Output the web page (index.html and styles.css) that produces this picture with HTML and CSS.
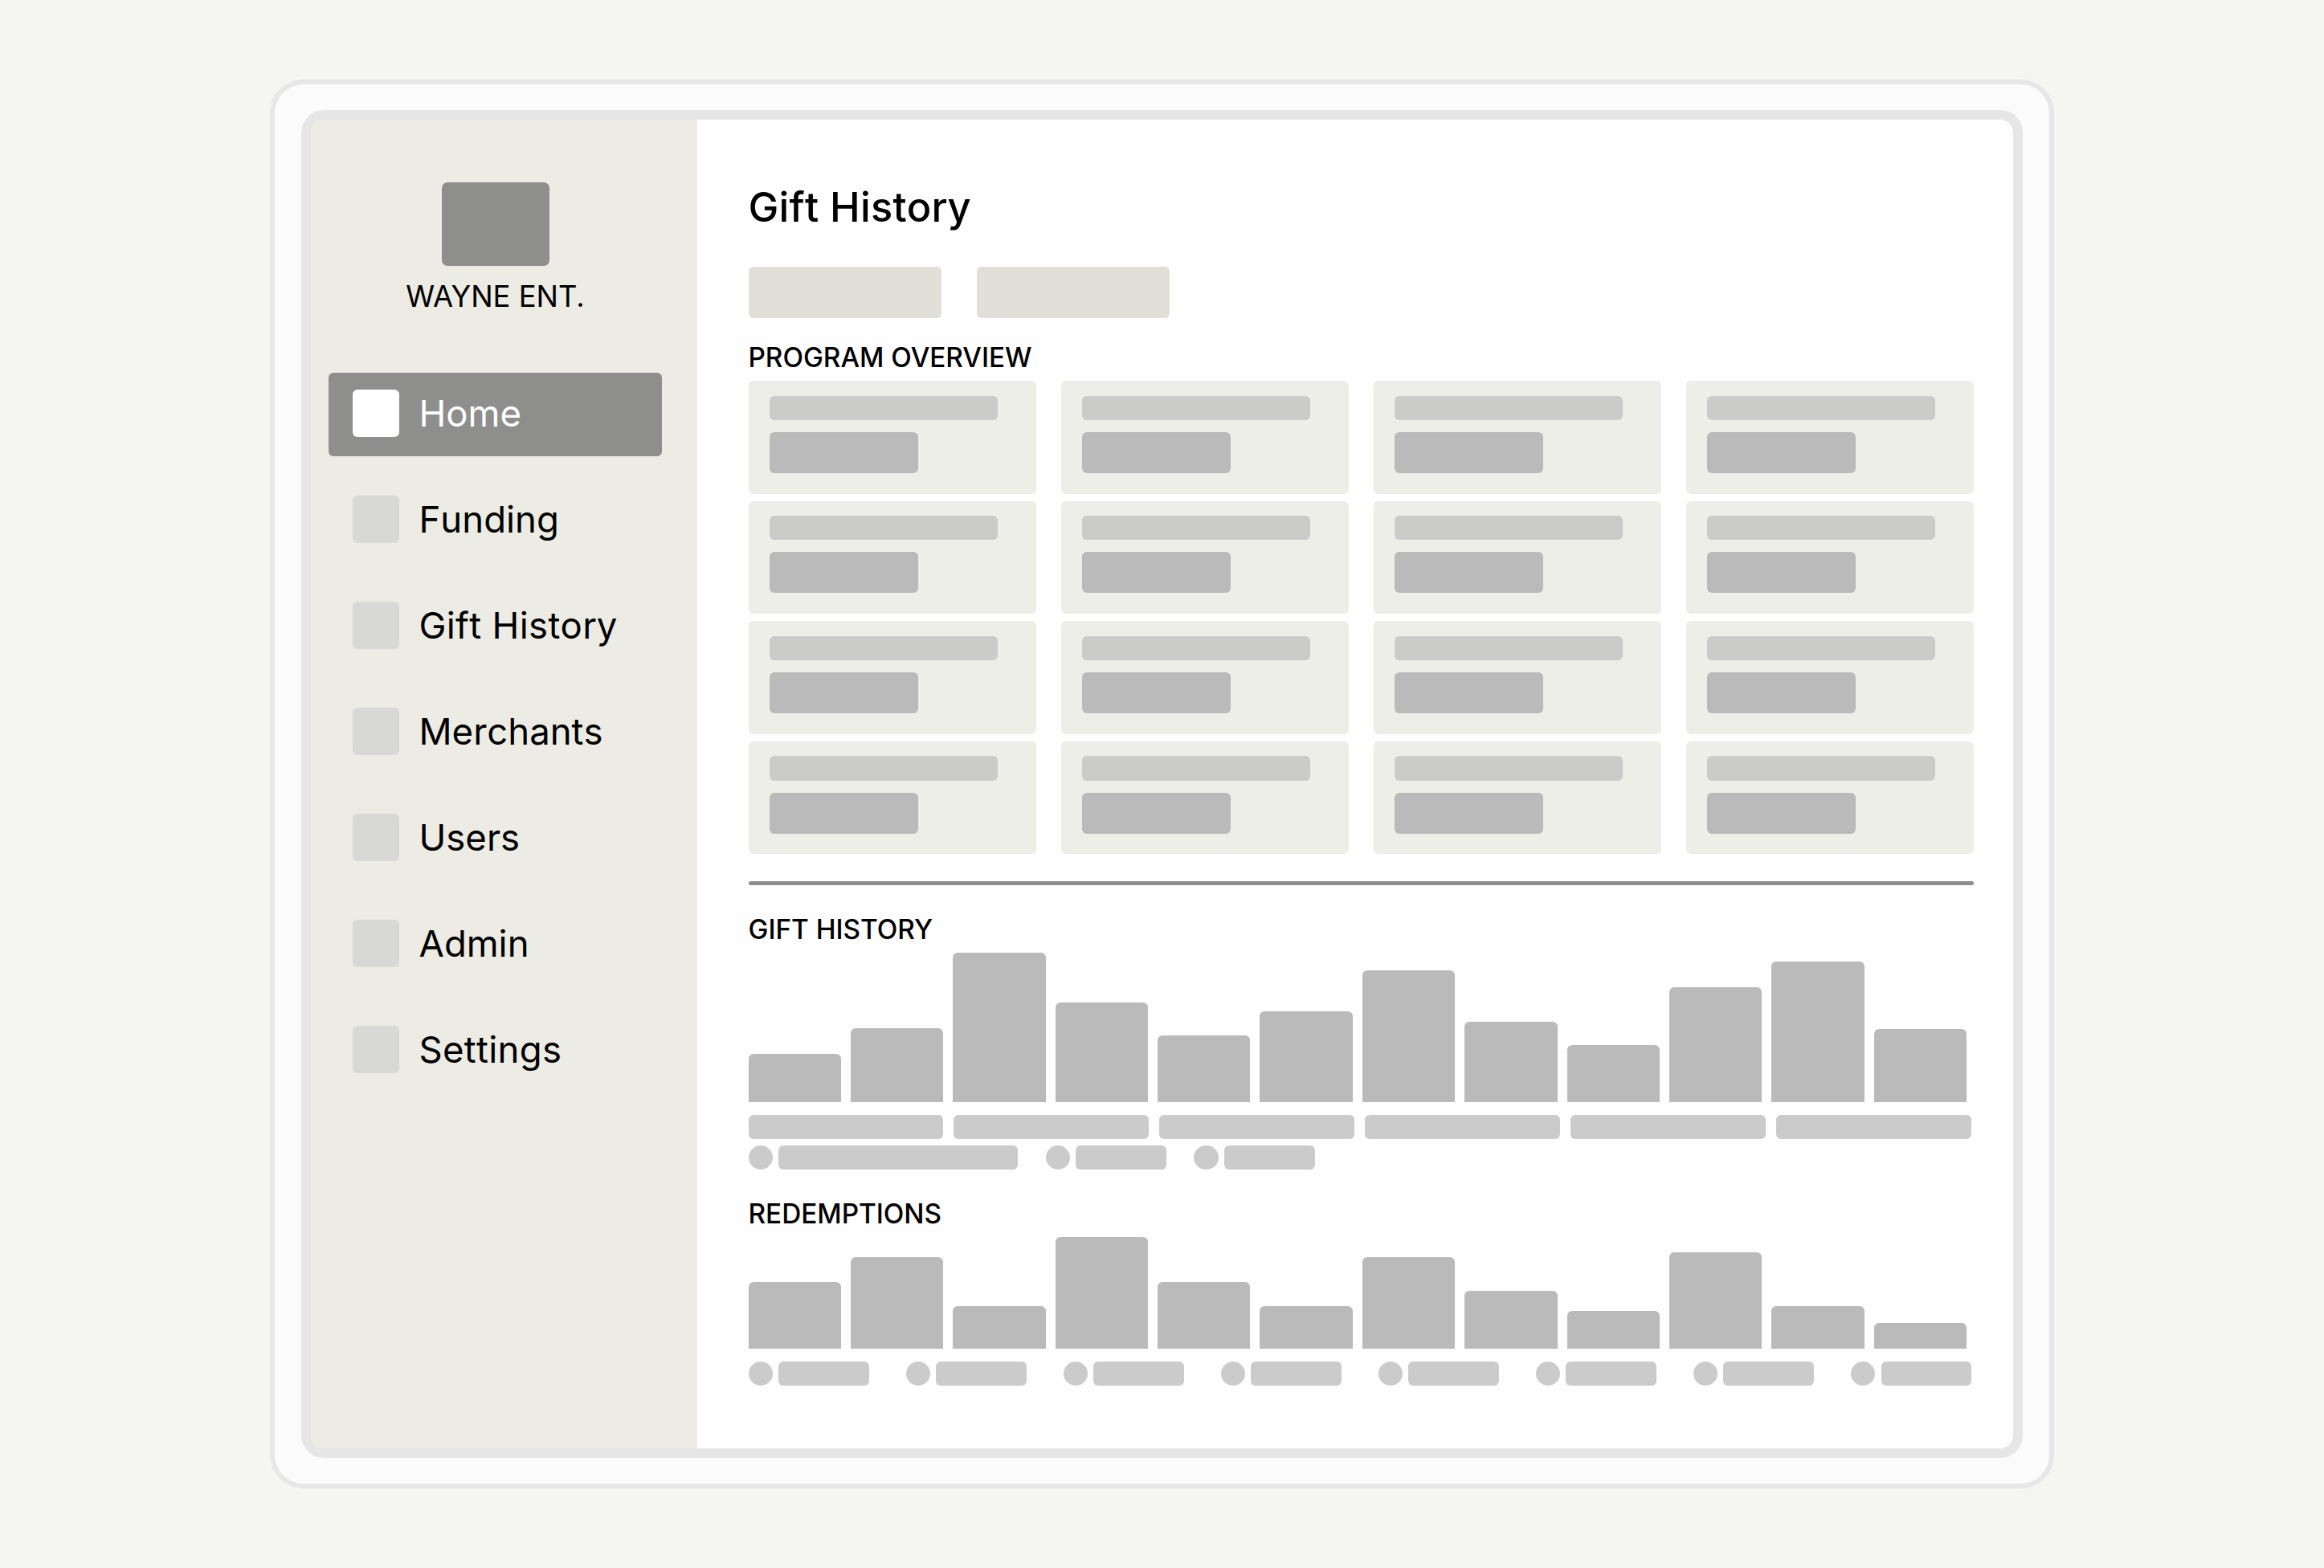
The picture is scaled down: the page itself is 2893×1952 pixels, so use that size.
FILE: index.html
```html
<!DOCTYPE html>
<html lang="en">
<head>
<meta charset="utf-8">
<title>Gift History</title>
<link rel="stylesheet" href="styles.css">
</head>
<body>
<div class="device">
  <div class="screen">
    <aside class="sidebar">
      <div class="logo"></div>
      <div class="company">WAYNE ENT.</div>
      <nav class="nav">
        <a class="nav-item active"><span class="nav-icon"></span><span>Home</span></a>
        <a class="nav-item"><span class="nav-icon"></span><span>Funding</span></a>
        <a class="nav-item spaced"><span class="nav-icon"></span><span>Gift History</span></a>
        <a class="nav-item"><span class="nav-icon"></span><span>Merchants</span></a>
        <a class="nav-item"><span class="nav-icon"></span><span>Users</span></a>
        <a class="nav-item"><span class="nav-icon"></span><span>Admin</span></a>
        <a class="nav-item spaced"><span class="nav-icon"></span><span>Settings</span></a>
      </nav>
    </aside>
    <main class="main">
      <h1 class="title">Gift History</h1>
      <div class="filters"><div class="filter"></div><div class="filter"></div></div>

      <h2 class="heading heading-overview"><span>PROGRAM OVERVIEW</span></h2>
      <div class="cards">
        <div class="card"><div class="label"></div><div class="value"></div></div>
        <div class="card"><div class="label"></div><div class="value"></div></div>
        <div class="card"><div class="label"></div><div class="value"></div></div>
        <div class="card"><div class="label"></div><div class="value"></div></div>
        <div class="card"><div class="label"></div><div class="value"></div></div>
        <div class="card"><div class="label"></div><div class="value"></div></div>
        <div class="card"><div class="label"></div><div class="value"></div></div>
        <div class="card"><div class="label"></div><div class="value"></div></div>
        <div class="card"><div class="label"></div><div class="value"></div></div>
        <div class="card"><div class="label"></div><div class="value"></div></div>
        <div class="card"><div class="label"></div><div class="value"></div></div>
        <div class="card"><div class="label"></div><div class="value"></div></div>
        <div class="card"><div class="label"></div><div class="value"></div></div>
        <div class="card"><div class="label"></div><div class="value"></div></div>
        <div class="card"><div class="label"></div><div class="value"></div></div>
        <div class="card"><div class="label"></div><div class="value"></div></div>
      </div>

      <div class="divider"></div>

      <h2 class="heading heading-gifts"><span>GIFT HISTORY</span></h2>
      <div class="chart chart-gifts">
        <div class="bar" style="height:60px"></div>
        <div class="bar" style="height:92px"></div>
        <div class="bar" style="height:186px"></div>
        <div class="bar" style="height:124px"></div>
        <div class="bar" style="height:83px"></div>
        <div class="bar" style="height:113px"></div>
        <div class="bar" style="height:164px"></div>
        <div class="bar" style="height:100px"></div>
        <div class="bar" style="height:71px"></div>
        <div class="bar" style="height:142.4px"></div>
        <div class="bar" style="height:175px"></div>
        <div class="bar" style="height:90.4px"></div>
      </div>
      <div class="axis">
        <div class="tick"></div><div class="tick"></div><div class="tick"></div>
        <div class="tick"></div><div class="tick"></div><div class="tick"></div>
      </div>
      <div class="legend legend-gifts">
        <div class="key"><i class="dot"></i><i class="name wide"></i></div>
        <div class="key"><i class="dot"></i><i class="name"></i></div>
        <div class="key"><i class="dot"></i><i class="name"></i></div>
      </div>

      <h2 class="heading heading-redemptions"><span>REDEMPTIONS</span></h2>
      <div class="chart chart-redemptions">
        <div class="bar" style="height:83px"></div>
        <div class="bar" style="height:113.5px"></div>
        <div class="bar" style="height:53px"></div>
        <div class="bar" style="height:138.5px"></div>
        <div class="bar" style="height:83px"></div>
        <div class="bar" style="height:53px"></div>
        <div class="bar" style="height:113.5px"></div>
        <div class="bar" style="height:71.5px"></div>
        <div class="bar" style="height:46.5px"></div>
        <div class="bar" style="height:120px"></div>
        <div class="bar" style="height:53px"></div>
        <div class="bar" style="height:31.5px"></div>
      </div>
      <div class="legend legend-redemptions">
        <div class="key"><i class="dot"></i><i class="name"></i></div>
        <div class="key"><i class="dot"></i><i class="name"></i></div>
        <div class="key"><i class="dot"></i><i class="name"></i></div>
        <div class="key"><i class="dot"></i><i class="name"></i></div>
        <div class="key"><i class="dot"></i><i class="name"></i></div>
        <div class="key"><i class="dot"></i><i class="name"></i></div>
        <div class="key"><i class="dot"></i><i class="name"></i></div>
        <div class="key"><i class="dot"></i><i class="name"></i></div>
      </div>
    </main>
  </div>
</div>
</body>
</html>
```
FILE: styles.css
```css
* { box-sizing: border-box; }

body {
  margin: 0;
  height: 1952px;
  padding: 99px 336px;
  overflow: hidden;
  background: #f5f5f1;
  color: #000;
  font-family: Inter, "Liberation Sans", sans-serif;
  font-optical-sizing: none;
  font-variant-ligatures: none;
}

.device {
  width: 2221px;
  height: 1754px;
  padding: 32px 33px;
  border: 6px solid #e7e7e7;
  border-radius: 42px;
  background: #fbfbfb;
}

.screen {
  display: flex;
  height: 100%;
  overflow: hidden;
  border: 12px solid #e6e6e6;
  border-radius: 28px;
  background: #fefefe;
}

/* Sidebar */
.sidebar {
  flex: none;
  width: 481px;
  padding: 78px 44px 0 22px;
  background: #ecece4;
}

.logo {
  width: 134px;
  height: 104px;
  margin-left: 140.6px;
  border-radius: 7px;
  background: #8e8e8d;
}

.company {
  margin-top: 13px;
  line-height: 50px;
  font-size: 36.4px;
  text-align: center;
  white-space: nowrap;
}

.nav {
  display: flex;
  flex-direction: column;
  gap: 28px;
  margin-top: 70px;
}

.nav-item {
  display: flex;
  align-items: center;
  gap: 24.5px;
  height: 104px;
  padding: 0 0 3px 29.5px;
  border-radius: 6px;
  font-size: 45.5px;
  font-kerning: none;
  line-height: 59px;
  white-space: nowrap;
}

.spaced { letter-spacing: 0.32px; }

.nav-icon {
  width: 58.5px;
  height: 58.5px;
  border-radius: 6px;
  background: #d8d8d7;
}

.active { background: #8e8e8d; color: #fff; }
.active .nav-icon { background: #fff; }

/* Content */
.main { padding: 78.6px 0 0 63.5px; }

.title {
  margin: 0;
  font-size: 50.6px;
  font-weight: 500;
  font-kerning: none;
  letter-spacing: 0.22px;
  line-height: 60px;
}

.filters { display: flex; gap: 44px; margin-top: 44px; }

.filter {
  width: 240.3px;
  height: 64.6px;
  border-radius: 6px;
  background: #e0e0d9;
}

.heading {
  margin: 0;
  font-size: 33.3px;
  font-weight: 500;
  line-height: 50px;
}

.heading-overview { margin-top: 20px; line-height: 58px; }
.heading-gifts { margin-top: 30px; }
.heading-redemptions { margin-top: 29.5px; }

.cards {
  display: grid;
  grid-template-columns: repeat(4, 358.5px);
  grid-auto-rows: 140.4px;
  gap: 9.2px 30.5px;
}

.card {
  padding: 18.4px 26.7px;
  border-radius: 6px;
  background: #edeee7;
}

.label {
  width: 283.5px;
  height: 30.3px;
  border-radius: 6px;
  background: #cbcbca;
}

.value {
  width: 185.3px;
  height: 51px;
  margin-top: 15px;
  border-radius: 6px;
  background: #bababa;
}

.divider {
  width: 1525.5px;
  height: 5px;
  margin-top: 33.4px;
  border-radius: 2.5px;
  background: #8e8e8e;
}

.chart { display: flex; align-items: flex-end; gap: 12.1px; }
.chart-gifts { height: 190px; }
.chart-redemptions { height: 143px; }

.bar {
  width: 115.3px;
  border-radius: 6px 6px 0 0;
  background: #bababa;
}

.axis { display: flex; gap: 13px; margin-top: 16px; }

.tick {
  width: 242.9px;
  height: 30.5px;
  border-radius: 6px;
  background: #cbcbcb;
}

.legend { display: flex; }
.legend-gifts { gap: 34.4px; margin-top: 7.5px; }
.legend-redemptions {
  justify-content: space-between;
  width: 1522.8px;
  margin-top: 16px;
}

.key { display: flex; gap: 7.2px; }

.dot {
  width: 30.3px;
  height: 30.3px;
  border-radius: 50%;
  background: #cbcbcb;
}

.name {
  width: 112.7px;
  height: 30.3px;
  border-radius: 6px;
  background: #cbcbcb;
}

.wide { width: 298.5px; }
```
